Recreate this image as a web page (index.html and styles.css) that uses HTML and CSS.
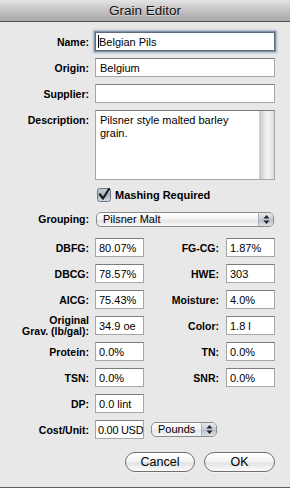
FILE: index.html
```html
<!DOCTYPE HTML>
<html lang="en">
  <head>
    <title>Grain Editor</title>
    <meta charset="utf-8">
    <link rel="stylesheet" href="styles.css">
  </head>
  <body>

  <div id="window">

    <div id="titlebar">Grain Editor</div>

    <div id="form">

      <div class="row">
        <span class="label">Name:</span>
        <div class="field wide focused"><span class="caret"></span>Belgian Pils</div>
      </div>

      <div class="row">
        <span class="label">Origin:</span>
        <div class="field wide">Belgium</div>
      </div>

      <div class="row">
        <span class="label">Supplier:</span>
        <div class="field wide"></div>
      </div>

      <div class="row desc-row">
        <span class="label top">Description:</span>
        <div class="field wide textarea">
          <div class="textarea-text">Pilsner style malted barley grain.</div>
          <div class="scrolltrack"></div>
        </div>
      </div>

      <div class="row check-row">
        <span class="label"></span>
        <svg class="checkbox" width="14" height="14" viewBox="0 0 14 14">
          <defs>
            <linearGradient id="cbg" x1="0" y1="0" x2="0" y2="1">
              <stop offset="0" stop-color="#c9d0d9"/>
              <stop offset="0.5" stop-color="#a9b3c0"/>
              <stop offset="1" stop-color="#d6dce4"/>
            </linearGradient>
          </defs>
          <rect x="0.5" y="0.5" width="13" height="13" rx="2" fill="url(#cbg)" stroke="#6e7784"/>
          <path d="M3 6.5 L6 10.5 L12 1" fill="none" stroke="#1d1d1d" stroke-width="2.2" stroke-linecap="round" stroke-linejoin="round"/>
        </svg>
        <span class="check-label">Mashing Required</span>
      </div>

      <div class="row popup-row">
        <span class="label">Grouping:</span>
        <div class="popup grouping">
          <span class="popup-text">Pilsner Malt</span>
          <span class="stepper">
            <svg width="7" height="9" viewBox="0 0 7 9"><path d="M3.5 0 L6.5 3.5 L0.5 3.5 Z M3.5 9 L6.5 5.5 L0.5 5.5 Z" fill="#222"/></svg>
          </span>
        </div>
      </div>

      <div class="row pair first-pair">
        <span class="label">DBFG:</span>
        <div class="field small">80.07%</div>
        <span class="label right">FG-CG:</span>
        <div class="field small">1.87%</div>
      </div>

      <div class="row pair">
        <span class="label">DBCG:</span>
        <div class="field small">78.57%</div>
        <span class="label right">HWE:</span>
        <div class="field small">303</div>
      </div>

      <div class="row pair">
        <span class="label">AICG:</span>
        <div class="field small">75.43%</div>
        <span class="label right">Moisture:</span>
        <div class="field small">4.0%</div>
      </div>

      <div class="row pair">
        <span class="label twoline">Original<br>Grav. (lb/gal):</span>
        <div class="field small">34.9 oe</div>
        <span class="label right">Color:</span>
        <div class="field small">1.8 l</div>
      </div>

      <div class="row pair">
        <span class="label">Protein:</span>
        <div class="field small">0.0%</div>
        <span class="label right">TN:</span>
        <div class="field small">0.0%</div>
      </div>

      <div class="row pair">
        <span class="label">TSN:</span>
        <div class="field small">0.0%</div>
        <span class="label right">SNR:</span>
        <div class="field small">0.0%</div>
      </div>

      <div class="row pair">
        <span class="label">DP:</span>
        <div class="field small">0.0 lint</div>
      </div>

      <div class="row pair">
        <span class="label">Cost/Unit:</span>
        <div class="field small tight">0.00 USD</div>
        <div class="popup units">
          <span class="popup-text">Pounds</span>
          <span class="stepper">
            <svg width="7" height="9" viewBox="0 0 7 9"><path d="M3.5 0 L6.5 3.5 L0.5 3.5 Z M3.5 9 L6.5 5.5 L0.5 5.5 Z" fill="#222"/></svg>
          </span>
        </div>
      </div>

    </div>

    <div id="buttons">
      <div class="button cancel">Cancel</div>
      <div class="button ok">OK</div>
    </div>

  </div>

  </body>
</html>
```

FILE: styles.css
```css
html, body {
  margin: 0;
  padding: 0;
}
body {
  background: #e8e8e8;
  font-family: "Liberation Sans", Arial, sans-serif;
  font-size: 11px;
  color: #000;
}

#window {
  width: 290px;
  height: 488px;
  box-sizing: border-box;
  border-bottom: 1px solid #5e5e5e;
  display: flex;
  flex-direction: column;
}

#titlebar {
  height: 21px;
  line-height: 21px;
  text-align: center;
  font-size: 13.5px;
  color: #111;
  text-shadow: 0 1px 0 rgba(255,255,255,0.5);
  background: linear-gradient(#e4e4e4, #c2c2c2 50%, #a9a9a9);
  border-bottom: 1px solid #525252;
}

#form {
  display: flex;
  flex-direction: column;
  gap: 7px;
  padding-top: 10px;
}

.row {
  display: flex;
  align-items: center;
  height: 19px;
}

.label {
  width: 89px;
  margin-right: 6px;
  flex: none;
  text-align: right;
  font-weight: bold;
  font-size: 10.5px;
  white-space: nowrap;
}
.label.right {
  width: 75px;
  margin-right: 7px;
  margin-left: 0;
}
.label.top {
  align-self: flex-start;
  padding-top: 4px;
}
.label.twoline {
  line-height: 11px;
}

.field {
  height: 19px;
  box-sizing: border-box;
  background: #fff;
  border: 1px solid #a6a6a6;
  border-top-color: #7c7c7c;
  padding: 2px 0 0 4px;
  font-size: 11px;
  line-height: 14px;
  white-space: nowrap;
  overflow: hidden;
  flex: none;
}
.field.wide {
  width: 180px;
}
.field.small {
  width: 49px;
  padding-left: 3px;
}
.field.tight {
  padding-left: 2px;
  letter-spacing: -0.3px;
}
.field.focused {
  border-color: #5d6b7e;
  box-shadow: 0 0 0 1px #7f90a6, 0 0 2px 2px #a9b6c6;
  padding-left: 2px;
}
.caret {
  display: inline-block;
  width: 1px;
  height: 13px;
  background: #000;
  vertical-align: -2px;
  margin-right: 0;
}

.desc-row {
  height: 70px;
  align-items: stretch;
}
.field.textarea {
  height: 70px;
  display: flex;
  padding: 0;
}
.textarea-text {
  flex: 1;
  white-space: normal;
  padding: 3px 4px 0 4px;
  line-height: 13px;
}
.scrolltrack {
  width: 14px;
  background: linear-gradient(to right, #c9c9c9, #eeeeee 40%, #f4f4f4 60%, #dcdcdc);
  border-left: 1px solid #d0d0d0;
}

.check-row {
  height: 16px;
}
.checkbox {
  margin-left: 2px;
  flex: none;
}
.check-label {
  margin-left: 4px;
  font-weight: bold;
  font-size: 11px;
}

.popup-row {
  height: 18px;
  margin-bottom: 3px;
}
.popup {
  height: 15px;
  box-sizing: border-box;
  border: 1px solid #8a8a8a;
  border-radius: 5px;
  background: linear-gradient(#ffffff, #f1f1f1 50%, #e2e2e2 51%, #f7f7f7);
  display: flex;
  align-items: center;
  overflow: hidden;
  flex: none;
}
.popup.grouping {
  width: 178px;
  margin-left: 1px;
}
.popup.units {
  width: 66px;
  margin-left: 7px;
}
.popup-text {
  flex: 1;
  padding-left: 6px;
  font-size: 11px;
  line-height: 13px;
}
.stepper {
  width: 14px;
  height: 100%;
  display: flex;
  align-items: center;
  justify-content: center;
  background: linear-gradient(#e8ecf1, #c3cad4 50%, #b4bcc8 51%, #dfe3e9);
  border-left: 1px solid #b0b0b0;
}

#buttons {
  display: flex;
  justify-content: flex-end;
  gap: 9px;
  padding: 13px 15px 0 0;
}
.button {
  height: 20px;
  box-sizing: border-box;
  border: 1px solid #6f6f6f;
  border-radius: 10px;
  background: linear-gradient(#ffffff, #f4f4f4 45%, #e3e3e3 55%, #fbfbfb);
  text-align: center;
  font-size: 12.5px;
  line-height: 18px;
  box-shadow: 0 1px 0 rgba(255,255,255,0.6);
}
.button.cancel {
  width: 70px;
}
.button.ok {
  width: 71px;
}
```
